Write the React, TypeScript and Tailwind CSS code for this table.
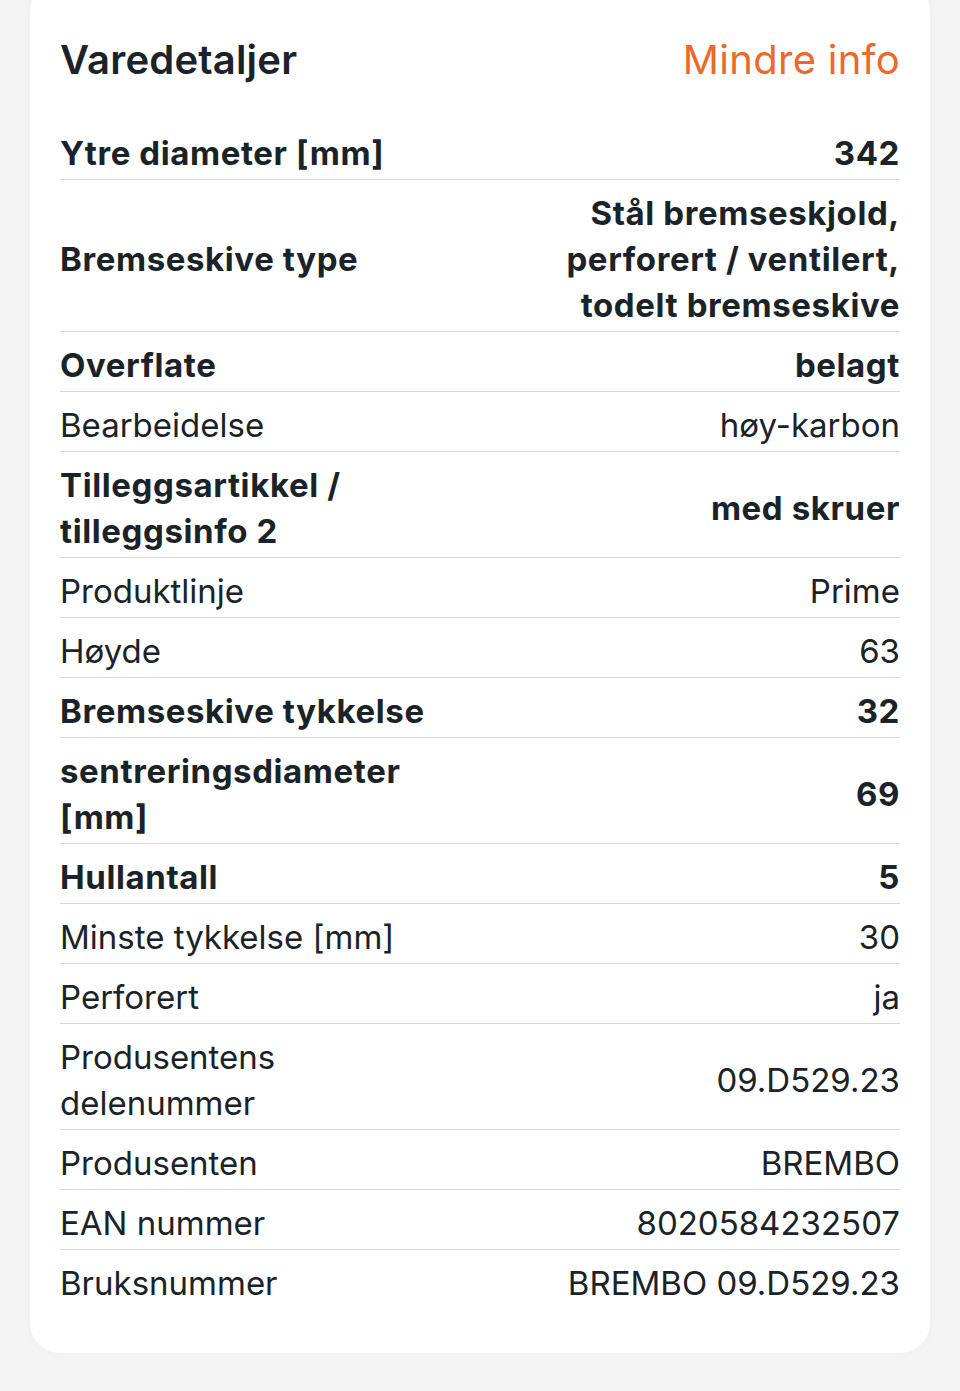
const rows: { label: string; value: string; bold?: boolean }[] = [
  { label: "Ytre diameter [mm]", value: "342", bold: true },
  { label: "Bremseskive type", value: "Stål bremseskjold, perforert / ventilert, todelt bremseskive", bold: true },
  { label: "Overflate", value: "belagt", bold: true },
  { label: "Bearbeidelse", value: "høy-karbon" },
  { label: "Tilleggsartikkel / tilleggsinfo 2", value: "med skruer", bold: true },
  { label: "Produktlinje", value: "Prime" },
  { label: "Høyde", value: "63" },
  { label: "Bremseskive tykkelse", value: "32", bold: true },
  { label: "sentreringsdiameter [mm]", value: "69", bold: true },
  { label: "Hullantall", value: "5", bold: true },
  { label: "Minste tykkelse [mm]", value: "30" },
  { label: "Perforert", value: "ja" },
  { label: "Produsentens delenummer", value: "09.D529.23" },
  { label: "Produsenten", value: "BREMBO" },
  { label: "EAN nummer", value: "8020584232507" },
  { label: "Bruksnummer", value: "BREMBO 09.D529.23" },
];

export default function App() {
  return (
    <div
      className="flex min-h-[1391px] flex-col bg-[#f4f4f4] px-[30px] text-[#1b2329]"
      style={{ fontFamily: "Inter, 'Noto Sans', sans-serif" }}
    >
      <div className="-mt-5 rounded-[30px] bg-white px-[30px] pt-[56px] pb-[44px] shadow-[0_0_10px_rgba(0,0,0,0.03)]">
        <div className="flex items-center justify-between pb-[36px]">
          <h2 className="text-[40px] leading-[48px] font-semibold tracking-[0.2px]">Varedetaljer</h2>
          <button className="text-[40px] leading-[48px] tracking-[0.3px] text-[#e96a2b]">Mindre info</button>
        </div>
        <div>
          {rows.map((r, i) => (
            <div
              key={r.label}
              className={`flex items-center gap-[40px] pt-[10px] pb-[3px] text-[33px] leading-[46px] ${
                i < rows.length - 1 ? "border-b border-[#d9d9d9]" : ""
              } ${r.bold ? "font-bold tracking-[0.6px]" : "font-normal"}`}
            >
              <div className="w-[400px] shrink-0">{r.label}</div>
              <div className="flex-1 text-right">{r.value}</div>
            </div>
          ))}
        </div>
      </div>
    </div>
  );
}
